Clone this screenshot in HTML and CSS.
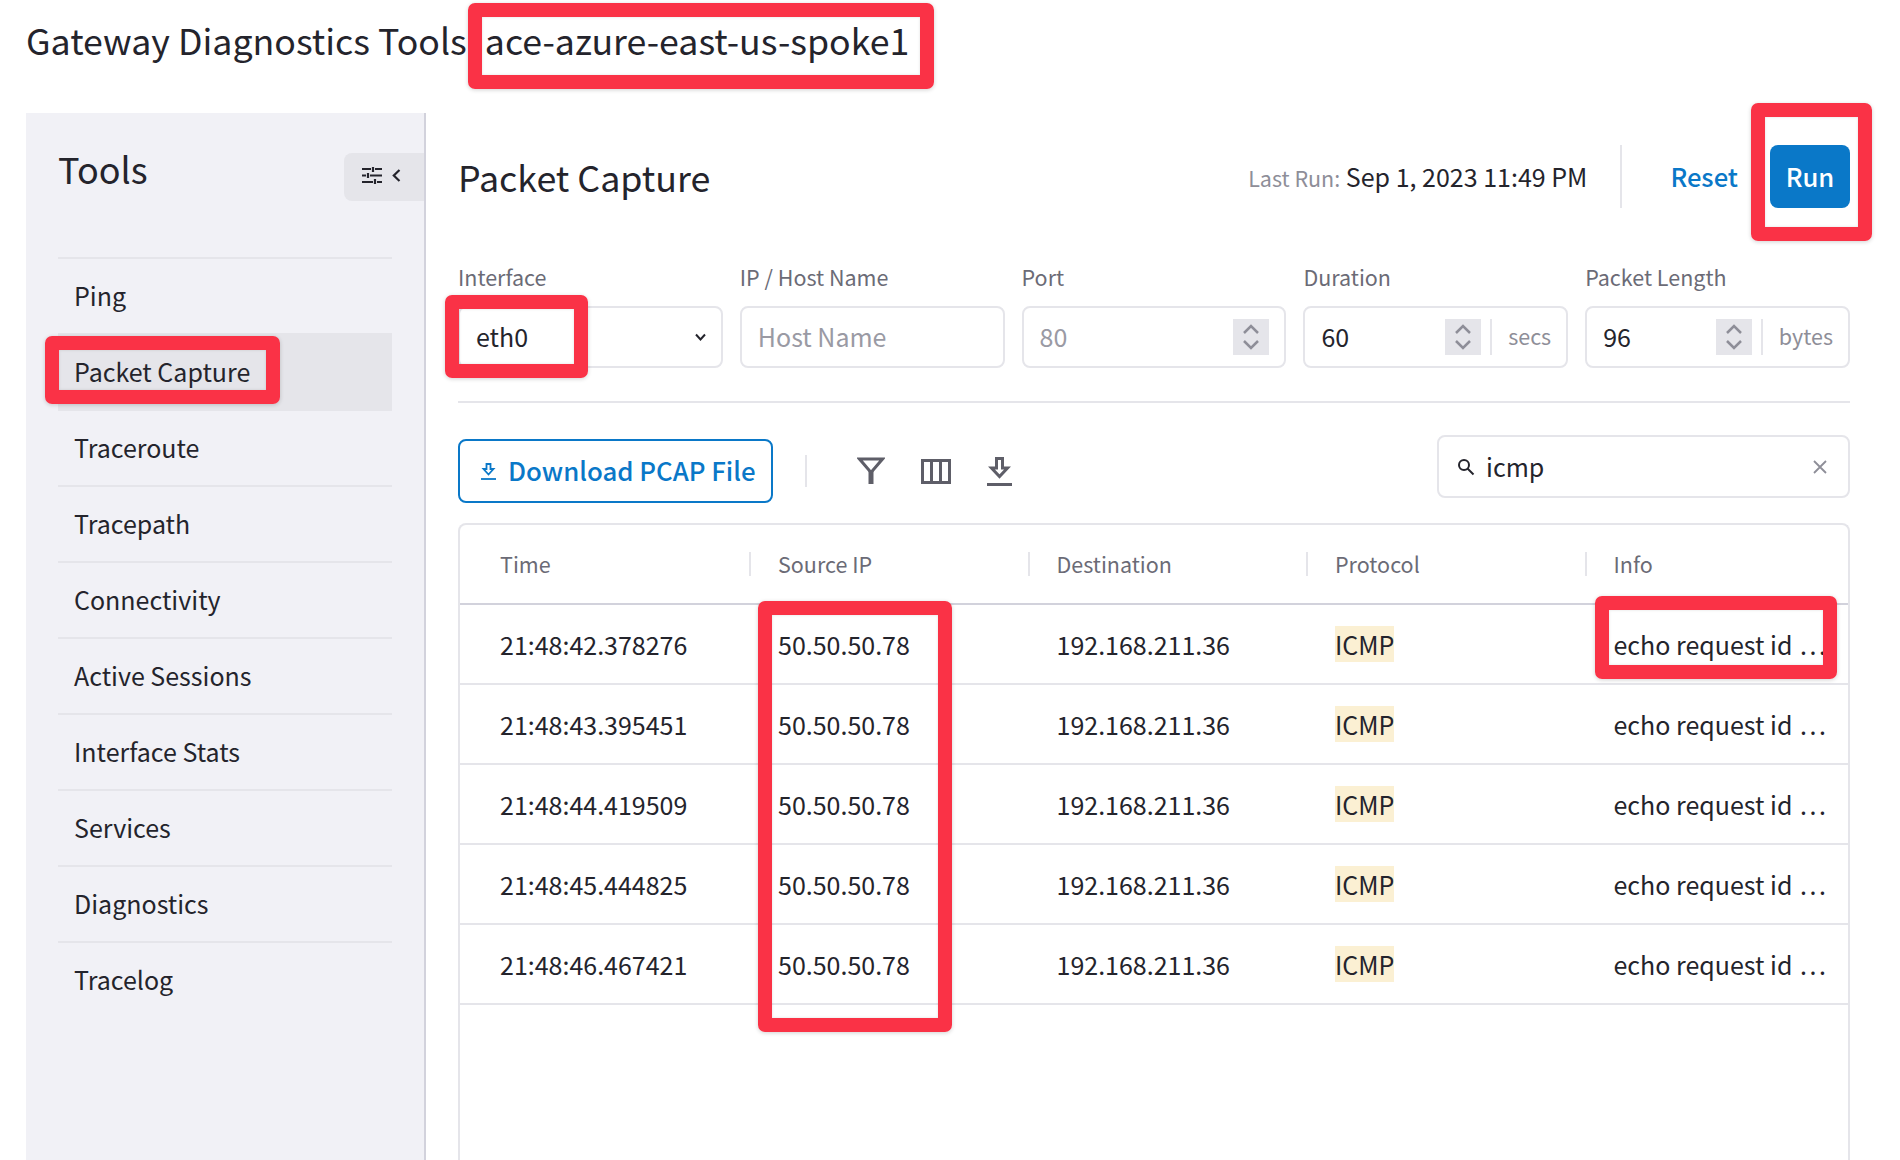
FILE: index.html
```html
<!DOCTYPE html>
<html lang="en">
<head>
    <meta charset="UTF-8">
    <meta name="viewport" content="width=device-width, initial-scale=1.0">
    <title>Gateway Diagnostics Tools</title>
    <link rel="stylesheet" href="styles.css">
</head>
<body>
    <h1 class="page-title">Gateway Diagnostics Tools <span class="gw-name">ace-azure-east-us-spoke1</span></h1>

    <div class="layout">
        <aside class="sidebar">
            <div class="sidebar-head">
                <h2>Tools</h2>
                <button class="collapse-btn" type="button" aria-label="Collapse">
                    <svg width="20" height="17" viewBox="0 0 20 17" fill="none" stroke="#24242c" stroke-width="2.200">
                        <path d="M0 2h9M13 2h7M11 0v5M0 8.500h4M8 8.500h12M6 6v5M0 15h11M15 15h5M13 12v5"/>
                    </svg>
                    <svg width="9" height="13" viewBox="0 0 9 13" fill="none" stroke="#24242c" stroke-width="2.200">
                        <path d="M7.500 1L1.800 6.500l5.700 5.500"/>
                    </svg>
                </button>
            </div>
            <nav class="tool-nav">
                <a href="#">Ping</a>
                <a href="#" class="active">Packet Capture</a>
                <a href="#">Traceroute</a>
                <a href="#">Tracepath</a>
                <a href="#">Connectivity</a>
                <a href="#">Active Sessions</a>
                <a href="#">Interface Stats</a>
                <a href="#">Services</a>
                <a href="#">Diagnostics</a>
                <a href="#">Tracelog</a>
            </nav>
        </aside>

        <main class="content">
            <div class="content-head">
                <h2>Packet Capture</h2>
                <div class="last-run"><span>Last Run:</span> Sep 1, 2023 11:49 PM</div>
                <a href="#" class="reset-link">Reset</a>
                <button class="run-btn" type="button">Run</button>
            </div>

            <form class="capture-form">
                <div class="form-item">
                    <label for="iface">Interface</label>
                    <div class="field">
                        <select id="iface"><option>eth0</option></select>
                        <svg width="11" height="8" viewBox="0 0 11 8" fill="none" stroke="#24242c" stroke-width="2"><path d="M1 1.500l4.500 5 4.500-5"/></svg>
                    </div>
                </div>
                <div class="form-item">
                    <label for="host">IP / Host Name</label>
                    <div class="field"><input id="host" type="text" placeholder="Host Name"></div>
                </div>
                <div class="form-item">
                    <label for="port">Port</label>
                    <div class="field">
                        <input id="port" type="text" placeholder="80">
                        <span class="stepper"><svg width="36" height="36" viewBox="0 0 36 36" fill="none" stroke="#8e8e98" stroke-width="2.500"><path d="M11 14l7-7 7 7M11 22l7 7 7-7"/></svg></span>
                    </div>
                </div>
                <div class="form-item">
                    <label for="duration">Duration</label>
                    <div class="field">
                        <input id="duration" type="text" value="60">
                        <span class="stepper"><svg width="36" height="36" viewBox="0 0 36 36" fill="none" stroke="#8e8e98" stroke-width="2.500"><path d="M11 14l7-7 7 7M11 22l7 7 7-7"/></svg></span>
                        <span class="unit">secs</span>
                    </div>
                </div>
                <div class="form-item">
                    <label for="pktlen">Packet Length</label>
                    <div class="field">
                        <input id="pktlen" type="text" value="96">
                        <span class="stepper"><svg width="36" height="36" viewBox="0 0 36 36" fill="none" stroke="#8e8e98" stroke-width="2.500"><path d="M11 14l7-7 7 7M11 22l7 7 7-7"/></svg></span>
                        <span class="unit">bytes</span>
                    </div>
                </div>
            </form>

            <div class="toolbar">
                <button class="download-btn" type="button">
                    <svg width="15" height="17" viewBox="0 0 15 17" fill="none" stroke="#0a78c8" stroke-width="1.800"><path d="M5.500 1h4v5h3L7.500 11.500 2.500 6h3z"/><path d="M0 16h15"/></svg>
                    Download PCAP File
                </button>
                <span class="toolbar-sep"></span>
                <div class="toolbar-icons">
                    <svg width="28" height="28" viewBox="0 0 28 28" fill="none" stroke="#5e5e68" stroke-width="3"><path d="M2.500 2h23L14 15.500z"/><path d="M14 14v13" stroke-width="5"/></svg>
                    <svg width="30" height="25" viewBox="0 0 30 25" fill="none" stroke="#5e5e68" stroke-width="3"><path d="M1.500 1.500h27v22h-27zM10.500 2v21M19.500 2v21"/></svg>
                    <svg width="25" height="29" viewBox="0 0 25 29" fill="none" stroke="#5e5e68" stroke-width="3"><path d="M9.500 1.500h6V11h5l-8 8.500-8-8.500h5z"/><path d="M0 27.500h25"/></svg>
                </div>
                <div class="search-box">
                    <svg width="18" height="18" viewBox="0 0 18 18" fill="none" stroke="#24242c" stroke-width="2"><circle cx="7" cy="7" r="5"/><path d="M10.500 10.500L16.500 16.500"/></svg>
                    <input type="text" value="icmp">
                    <svg class="search-clear" width="14" height="14" viewBox="0 0 14 14" fill="none" stroke="#8e8e98" stroke-width="1.800"><path d="M1 1l12 12M13 1L1 13"/></svg>
                </div>
            </div>

            <div class="table-wrap">
                <table class="packets">
                    <colgroup>
                        <col class="c-time"><col class="c-mid"><col class="c-mid"><col class="c-mid"><col>
                    </colgroup>
                    <thead>
                        <tr>
                            <th><span>Time</span></th>
                            <th><span>Source IP</span></th>
                            <th><span>Destination</span></th>
                            <th><span>Protocol</span></th>
                            <th><span>Info</span></th>
                        </tr>
                    </thead>
                    <tbody>
                        <tr><td>21:48:42.378276</td><td>50.50.50.78</td><td>192.168.211.36</td><td><mark>ICMP</mark></td><td>echo request id <span class="dots">...</span></td></tr>
                        <tr><td>21:48:43.395451</td><td>50.50.50.78</td><td>192.168.211.36</td><td><mark>ICMP</mark></td><td>echo request id <span class="dots">...</span></td></tr>
                        <tr><td>21:48:44.419509</td><td>50.50.50.78</td><td>192.168.211.36</td><td><mark>ICMP</mark></td><td>echo request id <span class="dots">...</span></td></tr>
                        <tr><td>21:48:45.444825</td><td>50.50.50.78</td><td>192.168.211.36</td><td><mark>ICMP</mark></td><td>echo request id <span class="dots">...</span></td></tr>
                        <tr><td>21:48:46.467421</td><td>50.50.50.78</td><td>192.168.211.36</td><td><mark>ICMP</mark></td><td>echo request id <span class="dots">...</span></td></tr>
                    </tbody>
                </table>
            </div>
        </main>
    </div>

    <!-- red annotation frames drawn over the screenshot -->
    <div class="mark-box mark-title"></div>
    <div class="mark-box mark-nav"></div>
    <div class="mark-box mark-iface"></div>
    <div class="mark-box mark-run"></div>
    <div class="mark-box mark-source"></div>
    <div class="mark-box mark-info"></div>
</body>
</html>
```

FILE: styles.css
```css
* {
    box-sizing: border-box;
}
html, body {
    height: 1160px;
    overflow: hidden;
}
body {
    margin: 0;
    background-color: #fff;
    color: #24242c;
    font-family: "Noto Sans CJK SC", "Noto Sans", sans-serif;
    font-size: 25px;
}
h1, h2 {
    margin: 0;
    font-weight: 400;
}
button, input, select {
    font: inherit;
    color: inherit;
}
.page-title {
    height: 113px;
    padding: 17px 0 0 26px;
    font-size: 35.700px;
    line-height: 46px;
    white-space: pre;
}
.gw-name {
    margin-left: 10px;
}

/* layout */
.layout {
    display: flex;
    height: 1047px;
}
.sidebar {
    width: 400px;
    margin-left: 26px;
    padding: 0 32px;
    background-color: #f1f1f6;
    border-right: 2px solid #d2d2dc;
    flex-shrink: 0;
}
.sidebar-head {
    display: flex;
    justify-content: space-between;
    height: 144px;
    margin-right: -32px;
    padding-top: 40px;
}
.sidebar-head h2 {
    font-size: 36px;
    line-height: 30px;
}
.collapse-btn {
    display: flex;
    align-items: center;
    gap: 10px;
    width: 80px;
    height: 48px;
    padding: 0 0 3px 18px;
    border: none;
    border-radius: 8px 0 0 8px;
    background-color: #e5e5ea;
}
.tool-nav {
    border-top: 2px solid #e5e5ea;
}
.tool-nav a {
    display: flex;
    align-items: center;
    height: 76px;
    padding: 0 0 2px 16px;
    border-bottom: 2px solid #e5e5ea;
    color: inherit;
    text-decoration: none;
    line-height: 30px;
}
.tool-nav a:last-child {
    border-bottom-color: transparent;
}
.tool-nav a.active {
    height: 78px;
    margin-top: -2px;
    padding-bottom: 0;
    background-color: #e5e5ea;
}

/* main column */
.content {
    flex: 1;
    min-width: 0;
    padding: 32px 50px 0 32px;
}
.content-head {
    display: flex;
    align-items: center;
    height: 63px;
    margin-bottom: 54px;
}
.content-head h2 {
    padding-bottom: 2px;
    font-size: 35.800px;
    line-height: 44px;
    margin-right: auto;
}
.last-run {
    padding-right: 33px;
    height: 63px;
    line-height: 63px;
    border-right: 2px solid #e5e5ea;
}
.last-run span {
    color: #8e8e98;
    font-size: 21.500px;
}
.reset-link {
    margin: 0 32px 0 48px;
    padding-bottom: 2px;
    color: #0a78c8;
    font-size: 25.600px;
    font-weight: 500;
    text-decoration: none;
}
.run-btn {
    width: 80px;
    height: 63px;
    padding: 0 0 2px;
    border: none;
    border-radius: 8px;
    background-color: #0a78c8;
    color: #fff;
    font-size: 25.600px;
    font-weight: 500;
}

/* form */
.capture-form {
    display: grid;
    grid-template-columns: repeat(5, minmax(0, 1fr));
    gap: 17px;
    padding-bottom: 33px;
    border-bottom: 2px solid #e5e5ea;
}
.form-item label {
    display: block;
    height: 32px;
    margin-bottom: 12px;
    color: #6b6b76;
    font-size: 21.500px;
    line-height: 29px;
}
.field {
    display: flex;
    align-items: center;
    height: 62px;
    padding: 0 15px 0 16px;
    border: 2px solid #e5e5ea;
    border-radius: 8px;
}
.field input, .field select {
    flex: 1;
    min-width: 0;
    width: 100%;
    padding: 0 0 2px;
    border: none;
    outline: none;
    background: none;
    appearance: none;
}
.field input::placeholder {
    color: #9a9aa4;
    opacity: 1;
}
.stepper {
    display: block;
    width: 36px;
    height: 36px;
    background-color: #e5e5ea;
    flex-shrink: 0;
}
.stepper svg {
    display: block;
}
.unit {
    height: 36px;
    margin-left: 9px;
    padding-left: 16px;
    border-left: 2px solid #e5e5ea;
    color: #8e8e98;
    font-size: 21.500px;
    line-height: 34px;
}

/* toolbar */
.toolbar {
    display: flex;
    align-items: flex-start;
    height: 68px;
    margin: 32px 0 20px;
}
.download-btn {
    display: flex;
    align-items: center;
    gap: 12px;
    width: 315px;
    height: 64px;
    margin-top: 4px;
    padding: 0 0 4px 21px;
    border: 2px solid #0a78c8;
    border-radius: 8px;
    background: #fff;
    color: #0a78c8;
    font-size: 25.800px;
    font-weight: 500;
}
.download-btn svg {
    margin-top: 4px;
}
.toolbar-sep {
    width: 2px;
    height: 32px;
    margin: 20px 0 0 32px;
    background-color: #e5e5ea;
}
.toolbar-icons {
    display: flex;
    align-items: center;
    gap: 36px;
    height: 32px;
    margin: 20px 0 0 50px;
}
.search-box {
    display: flex;
    align-items: center;
    gap: 11px;
    width: 413px;
    height: 63px;
    margin-left: auto;
    padding: 0 21px 0 18px;
    border: 2px solid #e5e5ea;
    border-radius: 8px;
}
.search-box input {
    flex: 1;
    min-width: 0;
    padding: 0 0 2px;
    border: none;
    outline: none;
}

/* packet table */
.table-wrap {
    height: 640px;
    border: 2px solid #e5e5ea;
    border-bottom: none;
    border-radius: 8px 8px 0 0;
}
.packets {
    width: 100%;
    border-collapse: collapse;
    table-layout: fixed;
}
.c-time {
    width: 289px;
}
.c-mid {
    width: 278.500px;
}
.packets th {
    height: 79px;
    padding: 0;
    border-bottom: 2px solid #d2d2dc;
    color: #6b6b76;
    font-size: 21.500px;
    font-weight: 400;
    text-align: left;
}
.packets th span {
    display: block;
    padding-left: 27px;
    border-left: 2px solid #e5e5ea;
    line-height: 24px;
}
.packets th:first-child span {
    padding-left: 40px;
    border-left: none;
}
.packets td {
    height: 80px;
    padding: 0 0 0 29px;
    border-bottom: 2px solid #e5e5ea;
    white-space: nowrap;
    overflow: hidden;
}
.packets td:first-child {
    padding-left: 40px;
}
.packets .dots {
    margin-left: 2px;
    letter-spacing: 2.500px;
}
.packets mark {
    display: inline-block;
    height: 36px;
    background-color: #fbf0d3;
    color: inherit;
    line-height: 36px;
}

/* annotations */
.mark-box {
    position: absolute;
    border: 14px solid #fa3246;
    border-radius: 7px;
    box-shadow: 0 1px 4px rgba(0, 0, 0, 0.18), inset 0 0 3px rgba(0, 0, 0, 0.12);
    pointer-events: none;
}
.mark-title {
    left: 468px;
    top: 3px;
    width: 466px;
    height: 86px;
}
.mark-nav {
    left: 45px;
    top: 336px;
    width: 235px;
    height: 68px;
}
.mark-iface {
    left: 445px;
    top: 295px;
    width: 143px;
    height: 83px;
}
.mark-run {
    left: 1751px;
    top: 103px;
    width: 121px;
    height: 138px;
}
.mark-source {
    left: 758px;
    top: 601px;
    width: 194px;
    height: 431px;
}
.mark-info {
    left: 1595px;
    top: 596px;
    width: 242px;
    height: 83px;
}
```
